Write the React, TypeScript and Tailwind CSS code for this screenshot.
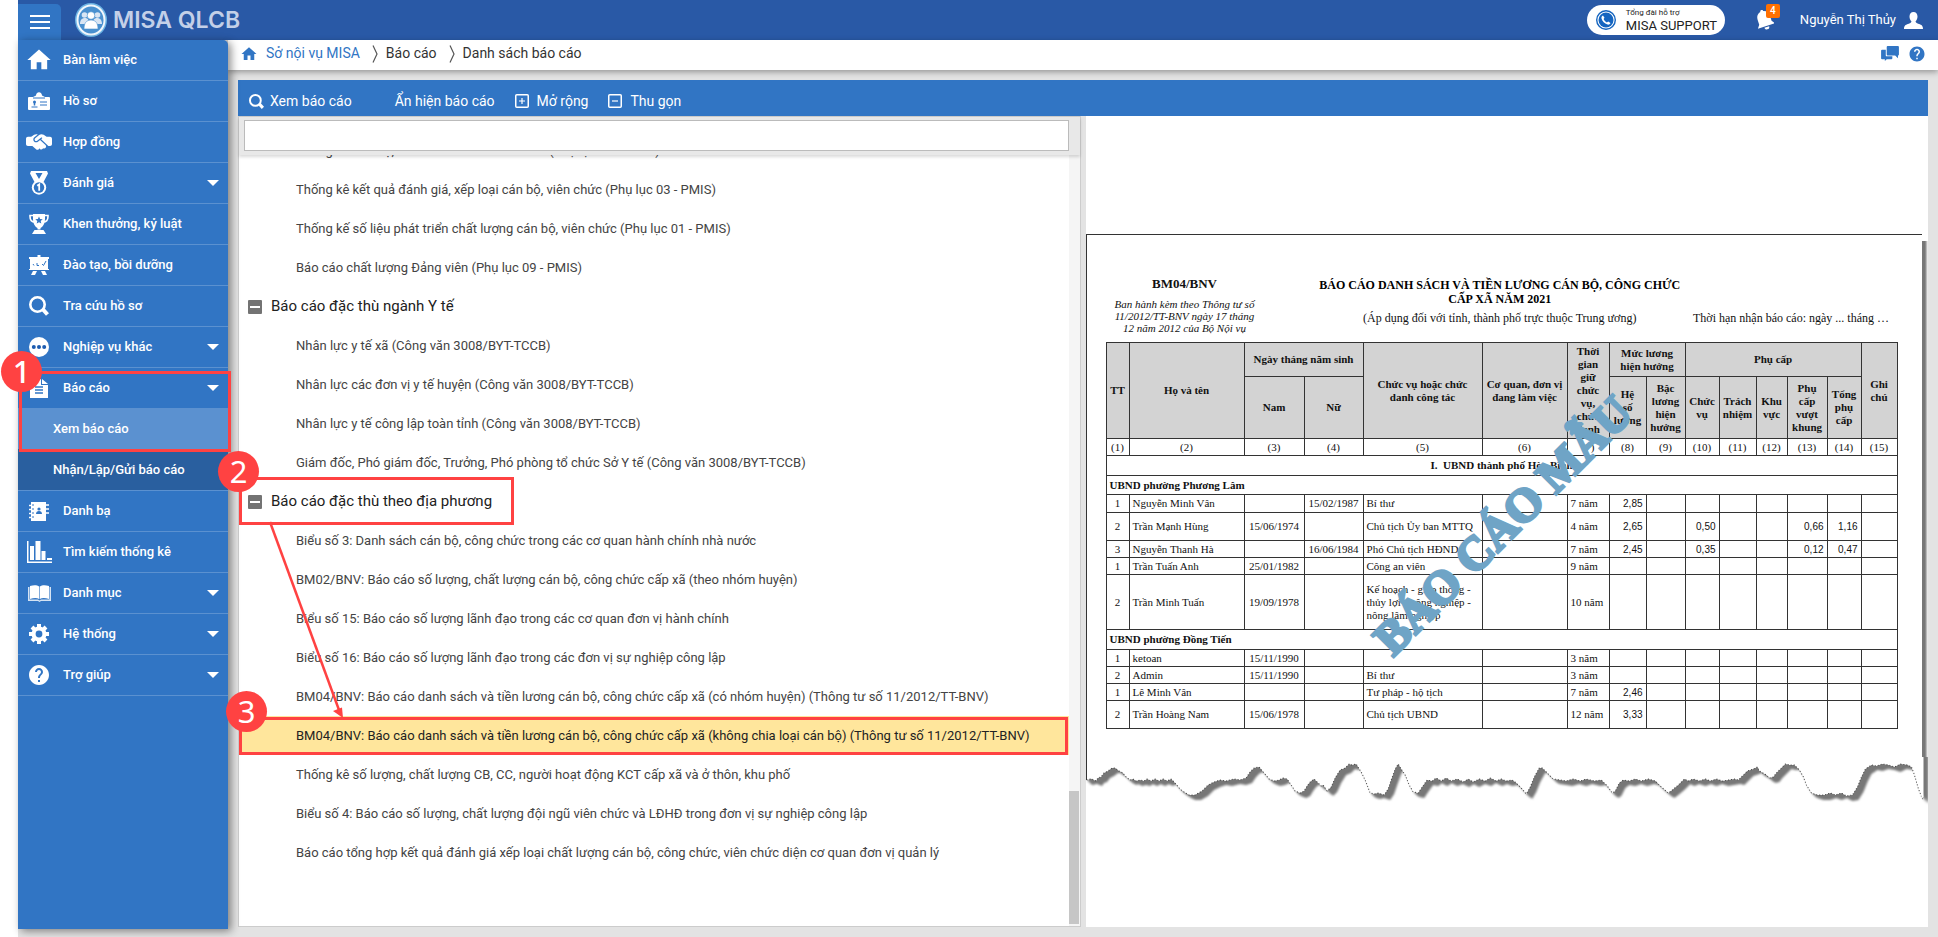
import type { ReactNode } from "react";
import { FaHandshakeSimple } from "react-icons/fa6";
import { MdHelp, MdHome } from "react-icons/md";

/* ---------- Icons ---------- */

const ProfileIcon = () => (
  <svg width="22" height="18" viewBox="0 0 22 18" fill="currentColor">
    <path d="M8 3.500C8 1.600 9.300.3 11 .3s3 1.300 3 3.200L17 5H5z" />
    <path d="M1 5h20a1 1 0 0 1 1 1v11a1 1 0 0 1-1 1H1a1 1 0 0 1-1-1V6a1 1 0 0 1 1-1z" />
    <path d="M5 6h12M12 10h7M12 13h7M3.500 15h6" stroke="#3175c4" strokeWidth="1" />
    <circle cx="6.500" cy="10" r="1.500" fill="#3175c4" />
    <path d="M6.500 11v2.500" stroke="#3175c4" strokeWidth="1.500" />
  </svg>
);

const MedalIcon = () => (
  <svg width="18" height="24" viewBox="0 0 18 24" fill="currentColor">
    <path d="M1 0h16l1 2.500L13.500 11h-9L0 2.500zM5.500 2L9 8l3.500-6z" fillRule="evenodd" />
    <circle cx="9" cy="16.500" r="7.200" />
    <circle cx="9" cy="16.500" r="5.200" fill="#3175c4" />
    <path d="M7.200 14.800l2-1.400v6.400" stroke="currentColor" strokeWidth="1.800" fill="none" />
  </svg>
);

const TrophyIcon = () => (
  <svg width="20" height="20" viewBox="0 0 20 20">
    <path d="M5 1.500H1v1C1 6 3 8 6 8M15 1.500h4v1C19 6 17 8 14 8" fill="none" stroke="currentColor" strokeWidth="1.600" />
    <path d="M4 0h12v5c0 5-2.500 8-4.500 9v1.500h-3V14C6.500 13 4 10 4 5z" fill="currentColor" />
    <path d="M5.500 16h9L17 20H3z" fill="currentColor" />
    <path d="M10 2.500l1.100 2.500 2.600.2-2 1.800.6 2.600L10 8.200 7.700 9.600 8.300 7l-2-1.800 2.600-.2z" fill="#3175c4" />
  </svg>
);

const BoardIcon = () => (
  <svg width="20" height="20" viewBox="0 0 20 20" fill="currentColor">
    <path d="M8.500 0h3v2h-3zM0 2h20v2h-1v10h1v1H0v-1h1V4H0zM4 16h4l-2 4H2zM12 16h4l2 4h-4z" />
    <path d="M4 9l1 1.500M8 8v2.500h2M13 9l1.500 1.500L17 6" stroke="#3175c4" fill="none" strokeWidth="1" />
  </svg>
);

const SearchIcon = ({ size }: { size: number }) => (
  <svg width={size} height={size} viewBox="0 0 20 20" fill="none" stroke="currentColor">
    <circle cx="8.500" cy="8.500" r="7.200" strokeWidth="2.600" />
    <path d="M14 13.500l4.500 5" strokeWidth="4" />
  </svg>
);

const MoreIcon = () => (
  <svg width="20" height="20" viewBox="0 0 20 20">
    <circle cx="10" cy="10" r="10" fill="currentColor" />
    <g fill="#1d5cb0">
      <circle cx="4.800" cy="10" r="2" />
      <circle cx="10" cy="10" r="2" />
      <circle cx="15.200" cy="10" r="2" />
    </g>
  </svg>
);

const ReportIcon = () => (
  <svg width="18" height="19" viewBox="0 0 18 19" fill="currentColor">
    <path d="M0 0h11v6h7v13H0z" />
    <path d="M12 0l6 5h-6z" />
    <path d="M5 8h8M5 11h8M5 14h8" stroke="#3175c4" strokeWidth="1.300" />
  </svg>
);

const ContactsIcon = () => (
  <svg width="20" height="19" viewBox="0 0 20 19" fill="currentColor">
    <path d="M2 0h15v19H2z" />
    <path d="M0 3.500h4M0 7.500h4M0 11.500h4M0 15.500h4M17 3h3M17 7h3M17 11h3" stroke="currentColor" strokeWidth="1.600" />
    <path d="M4 2v15" stroke="#3175c4" strokeWidth="1" strokeDasharray="2 2" />
    <circle cx="10" cy="7" r="1.600" fill="#3175c4" />
    <path d="M7 12c0-2 1.200-3 3-3s3 1 3 3z" fill="#3175c4" />
  </svg>
);

const ChartIcon = () => (
  <svg width="25" height="22" viewBox="0 0 25 22" fill="currentColor" className="shrink-0">
    <path d="M0 0h1.500v20.500H25V22H0zM3 5h4v14H3zM8.500 0h5v19h-5zM14.500 10h4v9h-4zM20 17h5v2h-5z" />
  </svg>
);

const BookIcon = () => (
  <svg width="23" height="17" viewBox="0 0 23 17" fill="currentColor">
    <path d="M0 2h1.500v12.500H10l1.500 1 1.500-1h8.500V2H23v14H13l-1.500 1-1.500-1H0z" opacity=".8" />
    <path d="M2 1C6-.3 9 0 11.200 1.500V14C9 12.700 6 12.700 2 14zM21 1c-4-1.300-7-1-9.200.5V14c2.200-1.300 5.200-1.300 9.200 0z" />
  </svg>
);

const GearIcon = () => (
  <svg width="20" height="20" viewBox="0 0 20 20">
    <circle cx="10" cy="10" r="7.500" fill="currentColor" />
    <path d="M10 0v20M0 10h20M3 3l14 14M17 3L3 17" stroke="currentColor" strokeWidth="4" />
    <circle cx="10" cy="10" r="3.400" fill="#3175c4" />
  </svg>
);

const Caret = () => (
  <svg width="12" height="6" viewBox="0 0 12 6" fill="currentColor" className="ml-auto">
    <path d="M0 0h12L6 6z" />
  </svg>
);

const LogoMark = () => (
  <svg width="32" height="34" viewBox="0 0 32 34">
    <ellipse cx="16" cy="17" rx="16" ry="17" fill="#6db4e4" />
    <ellipse cx="16" cy="17" rx="14.500" ry="15.500" fill="#f2f7fc" />
    <ellipse cx="16" cy="17" rx="12.500" ry="13.500" fill="#4a90cf" />
    <g fill="#d9e5f3">
      <circle cx="9.500" cy="12" r="2.800" />
      <circle cx="22.500" cy="12" r="2.800" />
      <path d="M5 21c0-4 2-6 5-6s4 2 4 6zM27 21c0-4-2-6-5-6s-4 2-4 6z" />
    </g>
    <g fill="#fff" stroke="#4a90cf" strokeWidth=".6">
      <circle cx="16" cy="12.500" r="3.800" />
      <path d="M9 26c0-6 2.500-9 7-9s7 3 7 9z" />
    </g>
  </svg>
);

const BellIcon = () => (
  <svg width="20" height="20" viewBox="0 0 20 20" fill="currentColor">
    <g transform="rotate(-18 10 10)">
      <path d="M9 1.200a1.500 1.500 0 0 1 3 0C15.500 2 17 4.800 17 8v5l2.500 3.500h-18L4 13V8c0-3.200 1.500-6 5-6.800z" />
      <path d="M8 17.500h5c0 1.500-1 2.500-2.500 2.500S8 19 8 17.500z" />
    </g>
  </svg>
);

const PersonIcon = () => (
  <svg width="19" height="17" viewBox="0 0 19 17" fill="currentColor">
    <path d="M9.500 0C12 0 13.500 1.800 13.500 4.500c0 2.200-.8 3.800-2 5 .3 1.300 1.500 1.900 3.500 2.500 2.500.8 4 1.700 4 5H0c0-3.300 1.500-4.200 4-5 2-.6 3.200-1.200 3.500-2.500-1.200-1.200-2-2.800-2-5C5.500 1.800 7 0 9.500 0z" />
  </svg>
);

const PhoneBadge = () => (
  <svg width="20" height="20" viewBox="0 0 20 20">
    <circle cx="10" cy="10" r="9.300" fill="none" stroke="#1565c0" strokeWidth="1.400" />
    <circle cx="10" cy="10" r="7.500" fill="#1565c0" />
    <path d="M7 5.500l1.500 2.300-.9 1.200c.6 1.500 1.700 2.700 3.300 3.400l1.300-.9 2.300 1.500c-.6 1.400-1.700 2-3 1.600-3-.9-5.200-3.100-6-6-.3-1.300.2-2.500 1.500-3.100z" fill="#fff" />
  </svg>
);

const ChatIcon = () => (
  <svg width="18" height="15" viewBox="0 0 19 16" fill="currentColor">
    <path d="M7 0h11a1 1 0 0 1 1 1v8a1 1 0 0 1-1 1v3l-3-3H7a1 1 0 0 1-1-1V1a1 1 0 0 1 1-1z" />
    <path d="M1 4h4v6a1 1 0 0 0 1 1h6v2a1 1 0 0 1-1 1H6l-2 2v-2H1a1 1 0 0 1-1-1V5a1 1 0 0 1 1-1z" />
  </svg>
);

const Chevron = () => (
  <svg width="6" height="18" viewBox="0 0 6 18" fill="none" stroke="#555" strokeWidth="1.200">
    <path d="M1 .5L5 9 1 17.500" />
  </svg>
);

const BoxIcon = ({ plus }: { plus?: boolean }) => (
  <svg width="14" height="14" viewBox="0 0 14 14" fill="none" stroke="currentColor">
    <rect x=".75" y=".75" width="12.500" height="12.500" rx="1" strokeWidth="1.500" />
    <path d={plus ? "M4 7h6M7 4v6" : "M4 7h6"} strokeWidth="1.200" />
  </svg>
);

/* ---------- Callouts ---------- */

const Step = ({ n, className }: { n: number; className: string }) => (
  <span
    className={`pointer-events-none absolute z-20 flex size-[41px] items-center justify-center rounded-full bg-[#ff4242] font-['Noto_Sans',sans-serif] text-[31px] leading-none text-white ${className}`}
  >
    {n}
  </span>
);

const Frame = ({ className }: { className: string }) => (
  <span className={`pointer-events-none absolute z-10 border-3 border-[#ff4242] ${className}`} />
);

/* ---------- Sidebar ---------- */

type NavItem = { label: string; icon: ReactNode; caret?: boolean };

const navTop: NavItem[] = [
  { label: "Bàn làm việc", icon: <MdHome size={28} className="shrink-0" /> },
  { label: "Hồ sơ", icon: <ProfileIcon /> },
  { label: "Hợp đồng", icon: <FaHandshakeSimple size={26} className="shrink-0" /> },
  { label: "Đánh giá", icon: <MedalIcon />, caret: true },
  { label: "Khen thưởng, kỷ luật", icon: <TrophyIcon /> },
  { label: "Đào tạo, bồi dưỡng", icon: <BoardIcon /> },
  { label: "Tra cứu hồ sơ", icon: <SearchIcon size={20} /> },
  { label: "Nghiệp vụ khác", icon: <MoreIcon />, caret: true },
];

const navBottom: NavItem[] = [
  { label: "Danh bạ", icon: <ContactsIcon /> },
  { label: "Tìm kiếm thống kê", icon: <ChartIcon /> },
  { label: "Danh mục", icon: <BookIcon />, caret: true },
  { label: "Hệ thống", icon: <GearIcon />, caret: true },
  { label: "Trợ giúp", icon: <MdHelp size={24} />, caret: true },
];

const NavRow = ({ item }: { item: NavItem }) => (
  <li>
    <button
      type="button"
      className="flex h-[41px] w-full items-center gap-3 border-b border-[#5b91d0] pr-[9px] pl-[9px] text-left"
    >
      <span className="flex w-6 shrink-0 justify-center">{item.icon}</span>
      {item.label}
      {item.caret && <Caret />}
    </button>
  </li>
);

const Sidebar = () => (
  <nav className="relative z-10 mb-2 w-[210px] shrink-0 rounded-tr-[5px] bg-[#3175c4] text-[13px] font-medium text-white shadow-[3px_2px_8px_rgba(0,0,0,0.45)]">
    <ul>
      {navTop.map((item) => (
        <NavRow key={item.label} item={item} />
      ))}
      <li className="relative">
        <button type="button" className="flex h-10 w-full items-center gap-3 pr-[9px] pl-[9px] text-left">
          <span className="flex w-6 shrink-0 justify-center">
            <ReportIcon />
          </span>
          Báo cáo
          <Caret />
        </button>
        <a href="#xem" className="flex h-[41px] items-center bg-[#5b91d0] pl-[35px]">
          Xem báo cáo
        </a>
        <a href="#nhan" className="flex h-[42px] items-center border-b border-[#5b91d0] bg-[#295f9f] pl-[35px]">
          Nhận/Lập/Gửi báo cáo
        </a>
        <Frame className="top-[3px] -right-[3px] left-px h-[81px]" />
        <Step n={1} className="-top-[17px] -left-[17px]" />
      </li>
      {navBottom.map((item) => (
        <NavRow key={item.label} item={item} />
      ))}
    </ul>
  </nav>
);

/* ---------- Report tree ---------- */

type TreeRow = { text: string; group?: boolean; selected?: boolean };

const treeRows: TreeRow[] = [
  { text: "Thống kê cán bộ, viên chức theo chức danh (Phụ lục 02 - PMIS)" },
  { text: "Thống kê kết quả đánh giá, xếp loại cán bộ, viên chức (Phụ lục 03 - PMIS)" },
  { text: "Thống kế số liệu phát triển chất lượng cán bộ, viên chức (Phụ lục 01 - PMIS)" },
  { text: "Báo cáo chất lượng Đảng viên (Phụ lục 09 - PMIS)" },
  { text: "Báo cáo đặc thù ngành Y tế", group: true },
  { text: "Nhân lực y tế xã (Công văn 3008/BYT-TCCB)" },
  { text: "Nhân lực các đơn vị y tế huyện (Công văn 3008/BYT-TCCB)" },
  { text: "Nhân lực y tế công lập toàn tỉnh (Công văn 3008/BYT-TCCB)" },
  { text: "Giám đốc, Phó giám đốc, Trưởng, Phó phòng tổ chức Sở Y tế (Công văn 3008/BYT-TCCB)" },
  { text: "Báo cáo đặc thù theo địa phương", group: true },
  { text: "Biểu số 3: Danh sách cán bộ, công chức trong các cơ quan hành chính nhà nước" },
  { text: "BM02/BNV: Báo cáo số lượng, chất lượng cán bộ, công chức cấp xã (theo nhóm huyện)" },
  { text: "Biểu số 15: Báo cáo số lượng lãnh đạo trong các cơ quan đơn vị hành chính" },
  { text: "Biểu số 16: Báo cáo số lượng lãnh đạo trong các đơn vị sự nghiệp công lập" },
  { text: "BM04/BNV: Báo cáo danh sách và tiền lương cán bộ, công chức cấp xã (có nhóm huyện) (Thông tư số 11/2012/TT-BNV)" },
  {
    text: "BM04/BNV: Báo cáo danh sách và tiền lương cán bộ, công chức cấp xã (không chia loại cán bộ) (Thông tư số 11/2012/TT-BNV)",
    selected: true,
  },
  { text: "Thống kê số lượng, chất lượng CB, CC, người hoạt động KCT cấp xã và ở thôn, khu phố" },
  { text: "Biểu số 4: Báo cáo số lượng, chất lượng đội ngũ viên chức và LĐHĐ trong đơn vị sự nghiệp công lập" },
  { text: "Báo cáo tổng hợp kết quả đánh giá xếp loại chất lượng cán bộ, công chức, viên chức diện cơ quan đơn vị quản lý" },
];

const TreePanel = () => (
  <section className="flex min-w-0 flex-col border border-[#ccc] bg-white">
    <div className="relative z-10 bg-[#e8e8e8] pt-[3px] pr-[11px] pb-1 pl-[5px] shadow-[0_2px_3px_rgba(0,0,0,0.15)]">
      <input
        type="text"
        aria-label="Tìm báo cáo"
        className="block h-[31px] w-full border border-[#bbb] bg-white px-2 text-[13px] outline-none"
      />
    </div>
    <div className="relative flex flex-1">
      <div className="min-w-0 flex-1 overflow-hidden">
        <ul className="-mt-6 whitespace-nowrap">
          {treeRows.map((row) =>
            row.group ? (
              <li key={row.text}>
                <button
                  type="button"
                  className="flex h-[39px] w-full items-center gap-[9px] pl-[9px] text-[15px] text-[#212121]"
                >
                  <span className="flex size-[14px] items-center justify-center rounded-[1px] bg-[#737373]">
                    <span className="h-0.5 w-2.5 bg-white" />
                  </span>
                  {row.text}
                </button>
              </li>
            ) : (
              <li key={row.text}>
                <a
                  href="#bao-cao"
                  className={`flex h-[39px] items-center pl-[57px] text-[13px] ${
                    row.selected ? "bg-[#ffe69c] text-[#222]" : "text-[#444]"
                  }`}
                >
                  {row.text}
                </a>
              </li>
            ),
          )}
        </ul>
      </div>
      <div className="flex w-[11px] flex-col justify-end bg-[#f5f5f5] pr-px pb-0.5">
        <div className="h-[133px] bg-[#c6c6c6]" />
      </div>

      <Frame className="top-[322px] left-0 h-12 w-[275px]" />
      <Step n={2} className="top-[296px] -left-[21px]" />
      <Frame className="top-[562px] right-[12px] left-0 h-[38px]" />
      <Step n={3} className="top-[536px] -left-[13px]" />
      <svg
        width="90"
        height="200"
        viewBox="0 0 90 200"
        className="pointer-events-none absolute top-[364px] left-[25px] z-10"
      >
        <path d="M6 3l69 188" stroke="#ff4242" strokeWidth="2.500" />
        <path d="M79 199l-10-7 9-3.500z" fill="#ff4242" />
      </svg>
    </div>
  </section>
);

/* ---------- Report preview ---------- */

type DataRow = {
  height: string;
  cells: string[];
};

const phuongLam: DataRow[] = [
  { height: "h-[18px]", cells: ["1", "Nguyễn Minh Vân", "", "15/02/1987", "Bí thư", "", "7 năm", "2,85", "", "", "", "", "", "", ""] },
  { height: "h-[28px]", cells: ["2", "Trần Mạnh Hùng", "15/06/1974", "", "Chủ tịch Ủy ban MTTQ", "", "4 năm", "2,65", "", "0,50", "", "", "0,66", "1,16", ""] },
  { height: "h-[17px]", cells: ["3", "Nguyễn Thanh Hà", "", "16/06/1984", "Phó Chủ tịch HĐND", "", "7 năm", "2,45", "", "0,35", "", "", "0,12", "0,47", ""] },
  { height: "h-[17px]", cells: ["1", "Trần Tuấn Anh", "25/01/1982", "", "Công an viên", "", "9 năm", "", "", "", "", "", "", "", ""] },
  { height: "h-[55px]", cells: ["2", "Trần Minh Tuấn", "19/09/1978", "", "Kế hoạch - giao thông -\nthủy lợi - nông nghiệp -\nnông lâm nghiệp", "", "10 năm", "", "", "", "", "", "", "", ""] },
];

const dongTien: DataRow[] = [
  { height: "h-[17px]", cells: ["1", "ketoan", "15/11/1990", "", "", "", "3 năm", "", "", "", "", "", "", "", ""] },
  { height: "h-[17px]", cells: ["2", "Admin", "15/11/1990", "", "Bí thư", "", "3 năm", "", "", "", "", "", "", "", ""] },
  { height: "h-[17px]", cells: ["1", "Lê Minh Vân", "", "", "Tư pháp - hộ tịch", "", "7 năm", "2,46", "", "", "", "", "", "", ""] },
  { height: "h-[28px]", cells: ["2", "Trần Hoàng Nam", "15/06/1978", "", "Chủ tịch UBND", "", "12 năm", "3,33", "", "", "", "", "", "", ""] },
];

const colWidths = [23, 115, 60, 59, 119, 85, 42, 37, 39, 34, 37, 31, 40, 34, 36];

const cellStyle = (i: number) => {
  if (i === 0 || i === 2 || i === 3) return "text-center";
  if (i >= 7) return "pr-[3px] text-right font-['Liberation_Sans',sans-serif] text-[10px]";
  return "pl-[3px] text-left";
};

const DataRows = ({ rows }: { rows: DataRow[] }) => (
  <>
    {rows.map((row, r) => (
      <tr key={r} className={row.height}>
        {row.cells.map((cell, i) => (
          <td key={i} className={`border border-[#333] whitespace-pre ${cellStyle(i)}`}>
            {cell}
          </td>
        ))}
      </tr>
    ))}
  </>
);

const Th = ({ text, col, row }: { text: string; col?: number; row?: number }) => (
  <th colSpan={col} rowSpan={row} className="border border-[#333] bg-[#d3d3d3] p-0 font-bold whitespace-pre">
    {text}
  </th>
);

const ReportTable = () => (
  <table className="w-full table-fixed border-collapse text-[11px] leading-[13px] text-[#111]">
    <colgroup>
      {colWidths.map((w, i) => (
        <col key={i} style={{ width: w }} />
      ))}
    </colgroup>
    <thead>
      <tr className="h-[34px]">
        <Th row={2} text="TT" />
        <Th row={2} text="Họ và tên" />
        <Th col={2} text="Ngày tháng năm sinh" />
        <Th row={2} text={"Chức vụ hoặc chức\ndanh công tác"} />
        <Th row={2} text={"Cơ quan, đơn vị\nđang làm việc"} />
        <Th row={2} text={"Thời\ngian\ngiữ\nchức\nvụ,\nchức\ndanh"} />
        <Th col={2} text={"Mức lương\nhiện hưởng"} />
        <Th col={5} text="Phụ cấp" />
        <Th row={2} text={"Ghi\nchú"} />
      </tr>
      <tr className="h-[62px]">
        <Th text="Nam" />
        <Th text="Nữ" />
        <Th text={"Hệ\nsố\nlương"} />
        <Th text={"Bậc\nlương\nhiện\nhưởng"} />
        <Th text={"Chức\nvụ"} />
        <Th text={"Trách\nnhiệm"} />
        <Th text={"Khu\nvực"} />
        <Th text={"Phụ\ncấp\nvượt\nkhung"} />
        <Th text={"Tổng\nphụ\ncấp"} />
      </tr>
    </thead>
    <tbody>
      <tr className="h-[17px]">
        {colWidths.map((_, i) => (
          <td key={i} className="border border-[#333] text-center">
            ({i + 1})
          </td>
        ))}
      </tr>
      <tr className="h-[20px]">
        <td colSpan={15} className="border border-[#333] text-center font-bold">
          I.&nbsp; UBND thành phố Hòa Bình
        </td>
      </tr>
      <tr className="h-[19px]">
        <td colSpan={15} className="border border-[#333] pl-[3px] font-bold">
          UBND phường Phương Lâm
        </td>
      </tr>
      <DataRows rows={phuongLam} />
      <tr className="h-[20px]">
        <td colSpan={15} className="border border-[#333] pl-[3px] font-bold">
          UBND phường Đồng Tiến
        </td>
      </tr>
      <DataRows rows={dongTien} />
    </tbody>
  </table>
);

const tornEdge =
  "M0 -12V23.300L5 21.700 10 24 12 21 15 20 18 16 22 14 26 11 29 11 33 14 37 16 39 19 44 23 47 22 50 24 54 23 58 24 61 22 65 24 69 22 73 24 77 22 81 24 85 22 88 25 94 32 98 35 103 38 109 38 116 34 122 28 128 25 134 23 140 24 148 22 154 23 160 21 164 15 168 11 173 10 178 16 183 22 188 24 193 23 197 21 201 22 205 28 209 34 214 36 218 34 221 29 224 25 228 22 231 25 235 29 237 28 241 34 245 30 249 21 254 13 259 11 263 7 266 8 270 7 275 15 279 23 284 36 288 37 292 36 298 38 302 32 305 23 309 12 312 7 315 12 319 18 323 28 327 35 332 36 336 30 341 23 346 24 350 21 355 24 360 21 365 24 371 22 377 25 382 22 387 25 393 22 399 24 404 21 410 24 415 22 420 24 426 23 430 26 435 31 440 37 444 30 448 20 453 11 456 11 461 16 467 22 474 23 480 24 487 22 494 24 500 22 508 24 515 23 521 29 526 36 529 34 533 26 537 23 543 24 549 22 555 24 562 22 569 24 575 30 582 36 586 33 592 28 598 22 602 24 607 22 613 24 619 22 624 24 630 22 636 24 642 23 648 22 652 23 657 18 661 14 667 12 671 10 673 14 680 18 683 21 687 20 690 16 694 12 699 7 703 8 708 8 713 13 717 20 720 28 725 36 731 38 738 38 744 36 749 38 755 36 760 39 766 38 771 30 775 20 779 12 785 8 790 9 796 7 802 8 808 10 814 7 821 8 825 10 828 18 832 32 836 42V-12z";

const TornEdge = () => (
  <svg viewBox="0 0 842 56" preserveAspectRatio="none" className="block h-14 w-full">
    <defs>
      <filter id="torn-blur" x="-5%" y="-20%" width="110%" height="140%">
        <feGaussianBlur stdDeviation="0.800" />
      </filter>
    </defs>
    <g fill="#777" filter="url(#torn-blur)">
      <path d={tornEdge} transform="translate(2 2)" />
      <path d={tornEdge} transform="translate(4 4)" />
      <path d={tornEdge} transform="translate(6 5)" />
    </g>
    <path d={tornEdge} fill="#fff" />
    <path d={tornEdge} fill="none" stroke="#444" strokeWidth="1" strokeDasharray="1 2" />
    <path d="M.5 0V23" stroke="#333" strokeWidth="1" />
    <path d="M836 0V40" stroke="#fff" strokeWidth="2" />
  </svg>
);

const PreviewPanel = () => (
  <section className="min-w-0 bg-white pt-[118px] font-['Liberation_Serif',serif] text-[#111]">
    <div className="flex">
      <div className="min-w-0 flex-1 border-t border-l border-[#333] pt-10 pr-[25px] pb-[28px] pl-[19px]">
        <header className="mb-2 grid grid-cols-[201px_1fr_204px] items-end text-[12px]">
          <div className="w-[158px] self-start text-center">
            <p className="text-[13px] leading-[18px] font-bold">BM04/BNV</p>
            <p className="mt-[5px] text-[11px] leading-[12px] italic">
              Ban hành kèm theo Thông tư số
              <br />
              11/2012/TT-BNV ngày 17 tháng
              <br />
              12 năm 2012 của Bộ Nội vụ
            </p>
          </div>
          <div className="flex flex-col items-center whitespace-nowrap">
            <h1 className="text-center text-[12px] leading-[14px] font-bold text-black">
              BÁO CÁO DANH SÁCH VÀ TIỀN LƯƠNG CÁN BỘ, CÔNG CHỨC
              <br />
              CẤP XÃ NĂM 2021
            </h1>
            <p className="mt-1 mb-2 leading-[16px]">(Áp dụng đối với tỉnh, thành phố trực thuộc Trung ương)</p>
          </div>
          <p className="mb-2 leading-[16px] whitespace-nowrap">Thời hạn nhận báo cáo: ngày ... tháng …</p>
        </header>
        <div className="relative">
          <ReportTable />
          <div className="pointer-events-none absolute inset-0 flex items-center justify-center pb-5 pl-1">
            <span className="-rotate-45 text-[47px] leading-none font-bold whitespace-nowrap text-[#6fa4c6] [-webkit-text-stroke:3px_#6fa4c6]">
              BÁO CÁO MẪU
            </span>
          </div>
        </div>
      </div>
      <div className="mt-[7px] w-[6px] bg-linear-to-r from-[#777] from-50% to-white" />
    </div>
    <TornEdge />
  </section>
);

/* ---------- Page ---------- */

const TopBar = () => (
  <header className="flex h-10 items-center bg-[#2959a6] text-white">
    <button
      type="button"
      aria-label="Menu"
      className="mt-1 flex h-9 w-[43px] items-center justify-center rounded-tr-[5px] bg-[#3175c4]"
    >
      <svg width="20" height="14" viewBox="0 0 20 14" stroke="currentColor" strokeWidth="2">
        <path d="M0 1h20M0 7h20M0 13h20" />
      </svg>
    </button>
    <a href="#home" className="ml-3.5 flex items-center gap-1.5">
      <LogoMark />
      <span className="font-[Inter,sans-serif] text-[23px] leading-none font-semibold text-[#c3d0e8]">MISA QLCB</span>
    </a>
    <button
      type="button"
      className="ml-auto flex h-[30px] w-[138px] items-center gap-2.5 rounded-full bg-white pl-[9px] text-left text-[#222]"
    >
      <PhoneBadge />
      <span className="flex flex-col whitespace-nowrap">
        <span className="text-[8px] leading-[10px]">Tổng đài hỗ trợ</span>
        <span className="text-[13px] leading-[15px]">MISA SUPPORT</span>
      </span>
    </button>
    <button type="button" aria-label="Thông báo" className="relative ml-[29px]">
      <BellIcon />
      <span className="absolute -top-1.5 left-3 flex size-3.5 items-center justify-center rounded-[2px] bg-[#ff7000] text-[10px] leading-none font-medium">
        4
      </span>
    </button>
    <button type="button" className="mr-[15px] ml-[26px] flex items-center gap-2 text-[13px]">
      Nguyễn Thị Thủy
      <PersonIcon />
    </button>
  </header>
);

const Breadcrumb = () => (
  <div className="relative flex h-[30px] items-center bg-white pr-3 pb-[3px] pl-3 text-[14px] text-[#333] shadow-[0_2px_6px_rgba(0,0,0,0.35)]">
    <a href="#home" className="flex items-center gap-2 text-[#3175c4]">
      <MdHome size={18} />
      Sở nội vụ MISA
    </a>
    <span className="mr-2 ml-3">
      <Chevron />
    </span>
    <a href="#bao-cao">Báo cáo</a>
    <span className="mr-2 ml-3">
      <Chevron />
    </span>
    <span>Danh sách báo cáo</span>
    <span className="ml-auto flex items-center gap-[9px] text-[#3175c4]">
      <button type="button" aria-label="Trao đổi">
        <ChatIcon />
      </button>
      <button type="button" aria-label="Trợ giúp">
        <MdHelp size={18} />
      </button>
    </span>
  </div>
);

const Toolbar = () => (
  <div className="flex h-9 items-center bg-[#3175c4] pt-1.5 pl-[11px] text-[14px] text-white">
    <button type="button" className="mr-[43px] flex items-center gap-1.5">
      <SearchIcon size={15} />
      Xem báo cáo
    </button>
    <button type="button" className="mr-5">
      Ẩn hiện báo cáo
    </button>
    <button type="button" className="mr-5 flex items-center gap-2">
      <BoxIcon plus />
      Mở rộng
    </button>
    <button type="button" className="flex items-center gap-2">
      <BoxIcon />
      Thu gọn
    </button>
  </div>
);

export default function App() {
  return (
    <div className="flex min-h-screen flex-col bg-white pl-[18px] font-[Roboto,sans-serif]">
      <TopBar />
      <div className="flex flex-1 bg-[#e3e3e3]">
        <Sidebar />
        <div className="flex min-w-0 flex-1 flex-col">
          <Breadcrumb />
          <main className="flex flex-1 flex-col p-2.5">
            <Toolbar />
            <div className="grid flex-1 grid-cols-2 gap-[5px]">
              <TreePanel />
              <PreviewPanel />
            </div>
          </main>
        </div>
      </div>
    </div>
  );
}
